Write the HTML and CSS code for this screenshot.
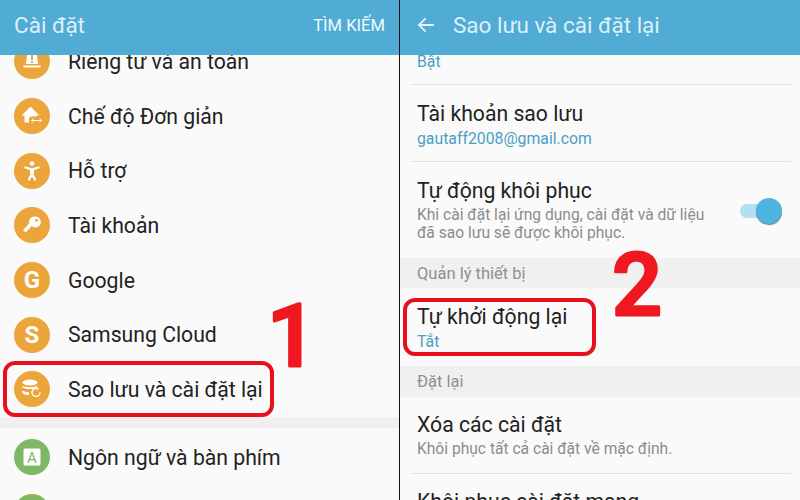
FILE: index.html
```html
<!DOCTYPE html>
<html lang="vi">
<head>
    <meta charset="UTF-8">
    <title>Cài đặt</title>
    <link rel="stylesheet" href="styles.css">
</head>
<body>
    <div class="screens">
        <section class="panel">
            <header class="appbar">
                <h1>Cài đặt</h1>
                <span class="search">TÌM KIẾM</span>
            </header>
            <ul class="menu">
                <li>
                    <span class="icon"><svg viewBox="0 0 24 24"><path d="M7.500 2h9l1.500 13H6z M3.500 16.500h17v2h-17z" fill="#fff"/><rect x="11" y="6" width="2" height="5" fill="#eca53a"/><rect x="11" y="12" width="2" height="2" fill="#eca53a"/></svg></span>
                    Riêng tư và an toàn
                </li>
                <li>
                    <span class="icon"><svg viewBox="0 0 24 24"><path d="M10.500 2.500 1.500 11.500h3v7h12v-7h3z" fill="#fff"/><rect x="9" y="12.500" width="15" height="8" rx="3" fill="#eca53a"/><path d="M11.500 16.500h10M13.500 14.700l-2 1.800 2 1.800M19.500 14.700l2 1.800-2 1.800" fill="none" stroke="#fff" stroke-width="1"/></svg></span>
                    Chế độ Đơn giản
                </li>
                <li>
                    <span class="icon"><svg viewBox="0 0 24 24"><circle cx="12" cy="4.500" r="2.300" fill="#fff"/><path d="M5.500 8.500 12 10.500l6.500-2M12 10.500v4.500M12 14.500 9 20.500M12 14.500l3 6" fill="none" stroke="#fff" stroke-width="2.300" stroke-linecap="round" stroke-linejoin="round"/><rect x="10" y="10" width="4" height="5" fill="#fff"/></svg></span>
                    Hỗ trợ
                </li>
                <li>
                    <span class="icon"><svg viewBox="0 0 24 24"><path d="M15.500 3.500a5.500 5.500 0 1 1-3.700 9.600l-6 6.400-2.800-2.200 6.300-7a5.500 5.500 0 0 1 6.200-6.800z" fill="#fff"/><circle cx="16.500" cy="7.500" r="1.400" fill="#eca53a"/></svg></span>
                    Tài khoản
                </li>
                <li>
                    <span class="icon icon-letter">G</span>
                    Google
                </li>
                <li>
                    <span class="icon icon-letter">S</span>
                    Samsung Cloud
                </li>
                <li>
                    <span class="icon"><svg viewBox="0 0 24 24"><ellipse cx="10" cy="5.500" rx="7.500" ry="3" fill="#fff"/><path d="M2.500 9c2 1.500 13 1.500 15 0v1.500c-1 .3-3 1-4.500 1.500H9c-3 0-5.500-.6-6.500-1.500zM2.500 13.500c1.500 1 4 1.500 6.500 1.500v3c-3 0-5.500-.6-6.500-2z" fill="#fff"/><circle cx="16" cy="15.500" r="4" fill="none" stroke="#fff" stroke-width="1.500" stroke-dasharray="21 4"/></svg></span>
                    Sao lưu và cài đặt lại
                </li>
                <li class="menu-gap"></li>
                <li>
                    <span class="icon icon-green"><svg viewBox="0 0 24 24"><rect x="3.500" y="3.500" width="17" height="17" rx="1.500" fill="#fff"/><text x="12" y="17.500" text-anchor="middle" class="glyph-a">A</text></svg></span>
                    Ngôn ngữ và bàn phím
                </li>
                <li>
                    <span class="icon icon-green"></span>
                </li>
            </ul>
            <div class="mark mark-one"></div>
            <svg class="number number-one" viewBox="0 0 60 90"><text x="4" y="76">1</text></svg>
        </section>

        <section class="panel">
            <header class="appbar">
                <svg class="back" viewBox="0 0 20 18"><path d="M19 9H2M9.500 1.500 2 9l7.500 7.500" fill="none" stroke="#e6f4fa" stroke-width="2"/></svg>
                <h1>Sao lưu và cài đặt lại</h1>
            </header>
            <div class="settings">
                <div class="row row-top">
                    <p class="value">Bật</p>
                </div>
                <div class="row row-account">
                    <p class="name">Tài khoản sao lưu</p>
                    <p class="value">gautaff2008@gmail.com</p>
                </div>
                <div class="row row-toggle">
                    <div>
                        <p class="name">Tự động khôi phục</p>
                        <p class="desc">Khi cài đặt lại ứng dụng, cài đặt và dữ liệu đã sao lưu sẽ được khôi phục.</p>
                    </div>
                    <span class="switch"><span class="knob"></span></span>
                </div>
                <div class="band">Quản lý thiết bị</div>
                <div class="row row-restart">
                    <p class="name">Tự khởi động lại</p>
                    <p class="value">Tắt</p>
                </div>
                <div class="band">Đặt lại</div>
                <div class="row row-reset">
                    <p class="name">Xóa các cài đặt</p>
                    <p class="desc">Khôi phục tất cả cài đặt về mặc định.</p>
                </div>
                <div class="row row-last">
                    <p class="name">Khôi phục cài đặt mạng</p>
                </div>
            </div>
            <div class="mark mark-two"></div>
            <svg class="number number-two" viewBox="0 0 60 90"><text x="1" y="76">2</text></svg>
        </section>
    </div>
</body>
</html>
```

FILE: styles.css
```css
html, body { margin: 0; padding: 0; height: 100%; overflow: hidden; background: #fafafa; }
body { font-family: Roboto, "Noto Sans", sans-serif; color: #222; }
p, h1, ul { margin: 0; padding: 0; }

.screens { display: flex; width: 800px; height: 500px; background: #111; }
.panel { position: relative; width: 399px; height: 500px; overflow: hidden; background: #fafafa; }
.panel + .panel { width: 400px; margin-left: 1px; }

.appbar { position: relative; z-index: 2; display: flex; align-items: center; height: 55px; padding: 0 14px 5px 14px; box-sizing: border-box; background: #50acd4; color: #dcf0f9; }
.appbar h1 { font-size: 22.500px; font-weight: 400; flex: 1; }
.search { font-size: 16.600px; color: #f2fafd; }
.back { width: 18px; height: 16px; margin: 0 18px 0 3px; }

.menu { list-style: none; margin-top: -21px; }
.menu li { display: flex; align-items: center; gap: 18px; height: 54.700px; padding-left: 14px; font-size: 21.200px; }
.menu .menu-gap { height: 11px; padding: 0; background: #f0f0f0; margin-bottom: 2px; }

.icon { display: flex; align-items: center; justify-content: center; flex: none; width: 36px; height: 36px; border-radius: 50%; background: #eca53a; }
.icon svg { width: 24px; height: 24px; }
.icon-letter { color: #fff; font-size: 24px; font-weight: 700; }
.icon-green { background: #7fb765; }
.glyph-a { font-size: 15px; fill: #7fb765; font-family: Roboto, sans-serif; }

.settings { display: flex; flex-direction: column; }
.name { font-size: 21.200px; line-height: 26px; }
.value { font-size: 15.800px; line-height: 20px; margin-top: 2px; color: #4b9fc4; }
.desc { font-size: 15.600px; line-height: 18px; margin-top: 2px; color: #8c8c8c; }

.row { position: relative; padding: 0 17px; box-sizing: border-box; }
.row::after { content: ""; position: absolute; left: 10px; right: 9px; bottom: 0; height: 1px; background: #e3e3e3; }
.row-top { height: 30px; }
.row-top .value { margin-top: -3px; }
.row-account { height: 77px; padding-top: 16px; }
.row-toggle { display: flex; align-items: center; justify-content: space-between; height: 96px; }
.row-toggle .desc { width: 298px; }
.row-toggle::after, .row-restart::after { display: none; }
.row-restart { height: 78px; padding-top: 16px; }
.row-reset { height: 77px; padding-top: 15px; }
.row-last { padding-top: 15px; }
.band { height: 30px; line-height: 31px; padding-left: 17px; background: #f0f0f0; color: #8f8f8f; font-size: 16.500px; }
.row-restart + .band { height: 31px; }

.switch { position: relative; display: block; flex: none; width: 36px; height: 14px; margin-right: 7px; margin-top: 2px; border-radius: 7px; background: #b5dff0; }
.knob { position: absolute; right: -6px; top: -6px; width: 26px; height: 26px; border-radius: 50%; background: #50b4e0; box-shadow: 0 1px 1px #777; }

/* red annotations over the screenshot */
.mark { position: absolute; z-index: 3; border: 4px solid #e8101e; border-radius: 12px; box-sizing: border-box; }
.mark-one { left: 3px; top: 361px; width: 271px; height: 56px; }
.mark-two { left: 3px; top: 298px; width: 193px; height: 58px; }
.number { position: absolute; z-index: 3; width: 60px; height: 90px; overflow: visible; }
.number text { font-family: Roboto, sans-serif; font-weight: 500; font-size: 88px; fill: #f01820; stroke: #f01820; stroke-width: 3px; stroke-linejoin: round; }
.number-one { left: 263px; top: 290px; }
.number-two { left: 211px; top: 239px; }
```
